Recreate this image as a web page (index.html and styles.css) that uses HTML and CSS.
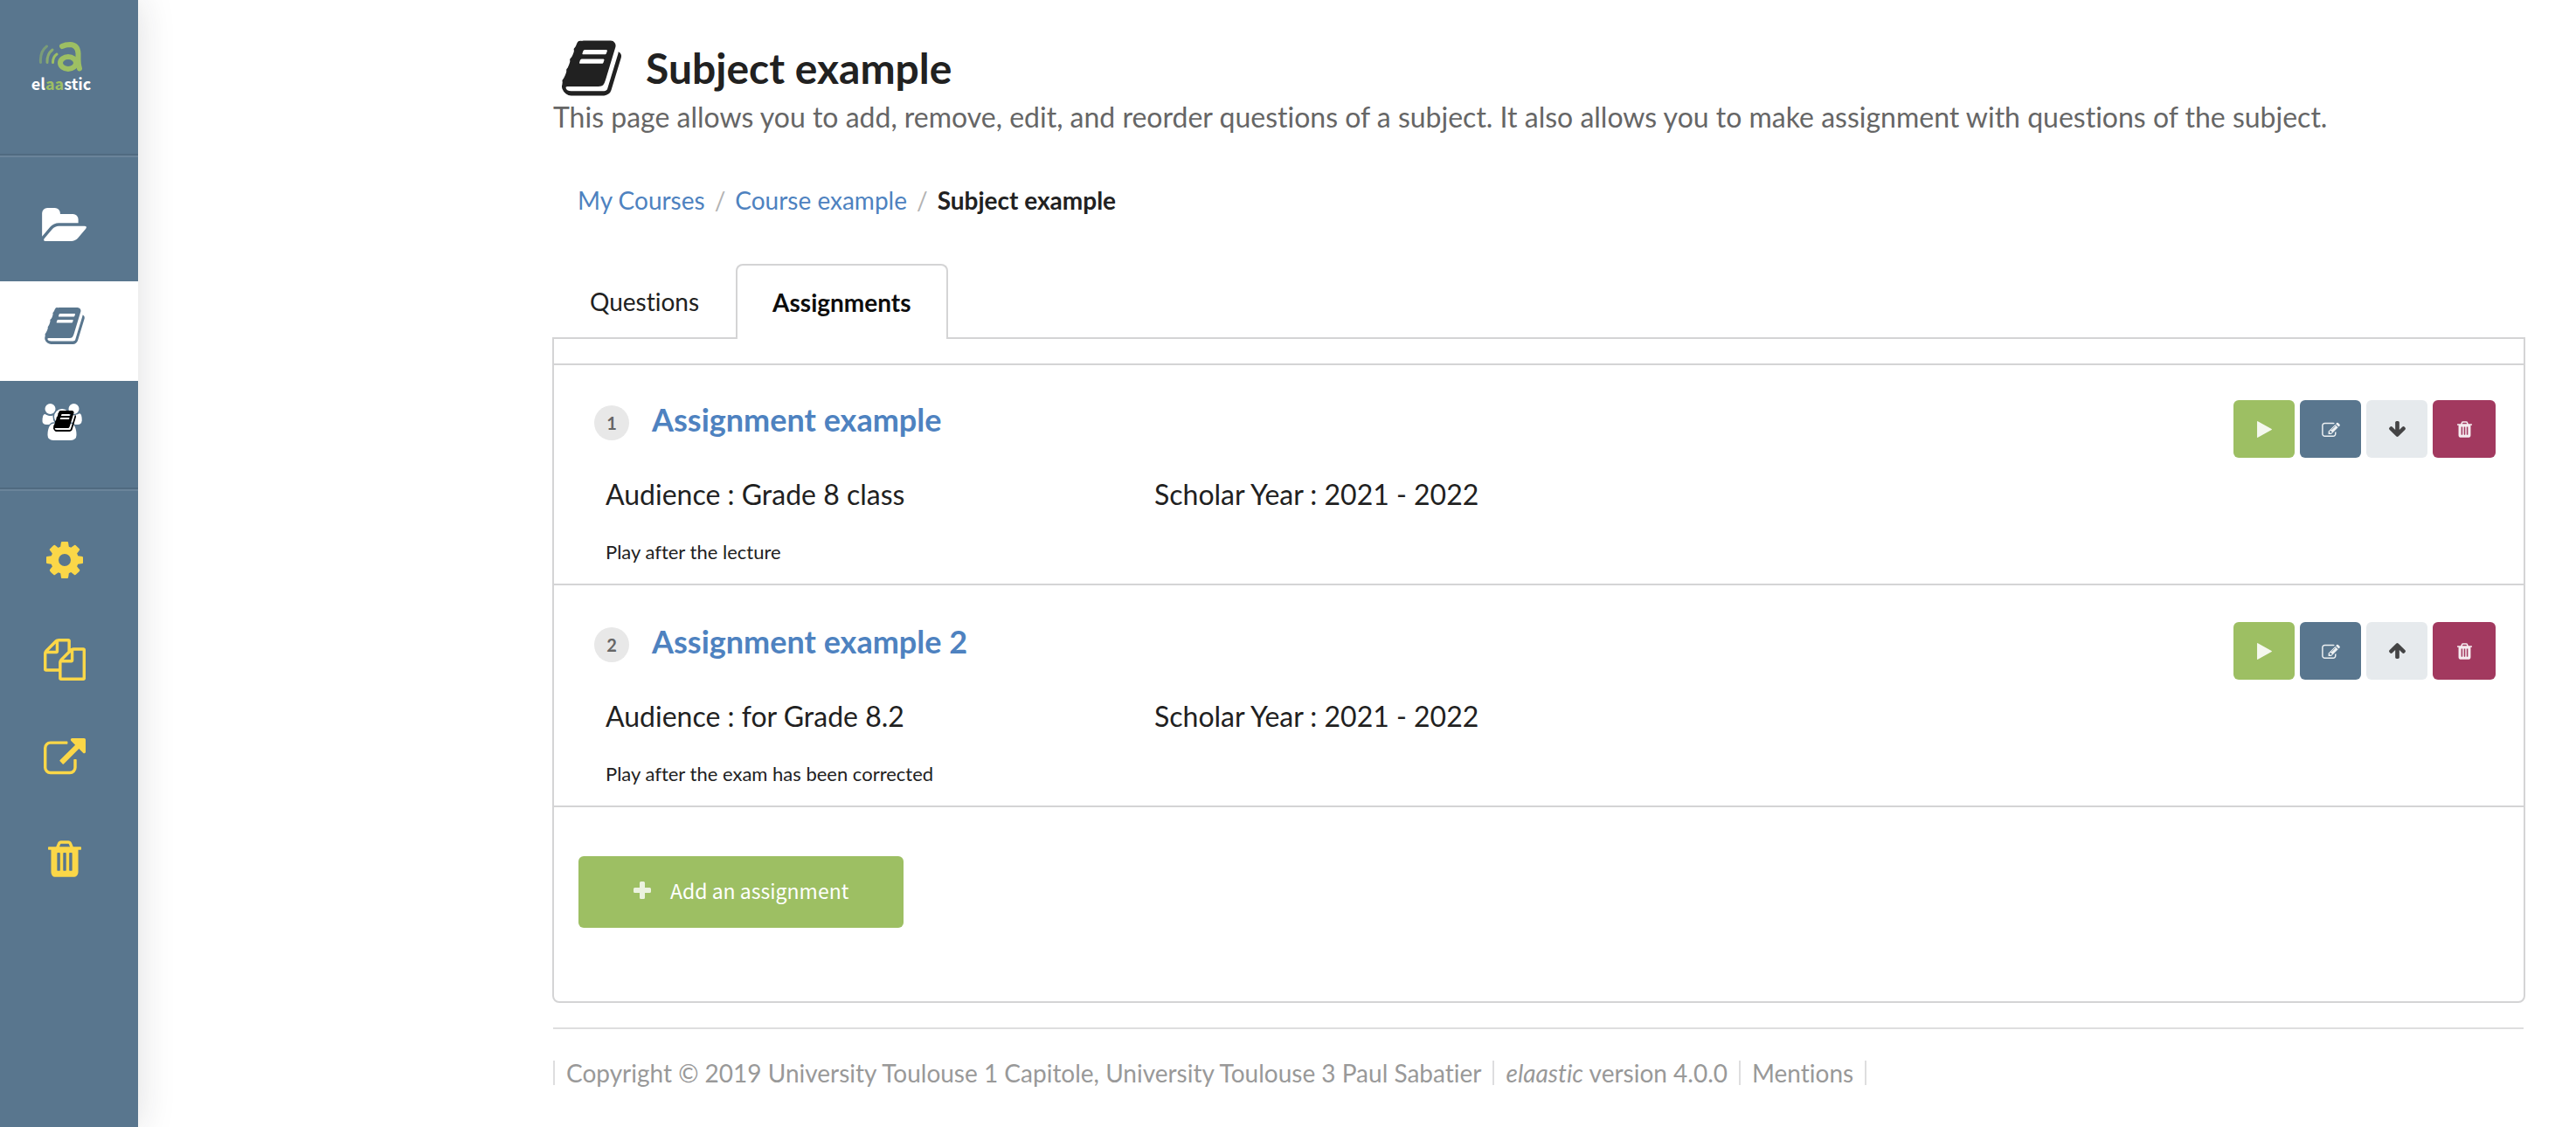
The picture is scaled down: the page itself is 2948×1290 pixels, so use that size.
FILE: index.html
```html
<!DOCTYPE html>
<html lang="en">
<head>
<meta charset="utf-8">
<meta name="viewport" content="width=device-width, initial-scale=1">
<title>Subject example - elaastic</title>
<link rel="stylesheet" href="styles.css">
</head>
<body class="page">
<svg class="sprite" aria-hidden="true">
  <symbol id="i-book" viewBox="0 128 1664 1536"><path d="M1639 478q40 57 18 129l-275 906q-19 64-76.500 107.500t-122.500 43.500h-923q-77 0-148.500-53.500t-99.500-131.500q-24-67-2-127 0-4 3-27t4-37q1-8-3-21.500t-3-19.500q2-11 8-21t16.500-23.500 16.500-23.500q23-38 45-91.500t30-91.500q3-10 .5-30t-.5-28q3-11 17-28t17-23q21-36 42-92t25-90q1-9-2.500-32t.5-28q4-13 22-30.500t22-22.500q19-26 42.500-84.500t27.500-96.500q1-8-3-25.500t-2-26.500q2-8 9-18t18-23 17-21q8-12 16.500-30.500t15-35 16-36 19.500-32 26.500-23.500 36-11.500 47.500 5.500l-1 3q38-9 51-9h761q74 0 114 56t18 130l-274 906q-36 119-71.500 153.500t-128.500 34.500h-869q-27 0-38 15-11 16-1 43 24 70 144 70h923q29 0 56-15.500t35-41.500l300-987q7-22 5-57 38 15 59 43zm-1064 2q-4 13 2 22.500t20 9.500h608q13 0 25.500-9.500t16.500-22.500l21-64q4-13-2-22.500t-20-9.500h-608q-13 0-25.500 9.500t-16.500 22.500zm-83 256q-4 13 2 22.500t20 9.500h608q13 0 25.500-9.500t16.500-22.500l21-64q4-13-2-22.500t-20-9.500h-608q-13 0-25.500 9.500t-16.500 22.500z"/></symbol>
  <symbol id="i-folder" viewBox="0 128 1879 1408"><path d="M1879 952q0 31-31 66l-336 396q-43 51-120.500 86.500t-143.500 35.500h-1088q-34 0-60.500-13t-26.500-43q0-31 31-66l336-396q43-51 120.500-86.500t143.500-35.500h1088q34 0 60.500 13t26.500 43zm-343-344v160h-832q-94 0-197 47.500t-164 119.500l-337 396-5 6q0-4-.5-12.500t-.5-12.500v-960q0-92 66-158t158-66h320q92 0 158 66t66 158v32h544q92 0 158 66t66 158z"/></symbol>
  <symbol id="i-group" viewBox="0 0 1920 1792"><path d="M593 896q-162 5-265 128h-134q-82 0-138-40.500t-56-118.500q0-353 124-353 6 0 43.500 21t97.500 42.500 119 21.500q67 0 133-23-5 37-5 66 0 159 93 293zm1071 637q0 120-73 189.500t-194 69.500h-874q-121 0-194-69.500t-73-189.500q0-53 3.500-103.500t14-109 26.500-108.500 43-97.500 62-81 85.500-53.500 111.500-20q10 0 43 21.500t73 48 107 48 135 21.500 135-21.500 107-48 73-48 43-21.500q61 0 111.500 20t85.500 53.500 62 81 43 97.500 26.500 108.500 14 109 3.500 103.500zm-1024-1277q0 106-75 181t-181 75-181-75-75-181 75-181 181-75 181 75 75 181zm704 384q0 159-112.500 271.500t-271.500 112.500-271.500-112.500-112.500-271.500 112.500-271.500 271.500-112.500 271.500 112.500 112.500 271.500zm576 225q0 78-56 118.500t-138 40.500h-134q-103-123-265-128 93-134 93-293 0-29-5-66 66 23 133 23 59 0 119-21.500t97.500-42.500 43.500-21q124 0 124 353zm-128-609q0 106-75 181t-181 75-181-75-75-181 75-181 181-75 181 75 75 181z"/></symbol>
  <symbol id="i-cog" viewBox="128 128 1536 1536"><path d="M1152 896q0-106-75-181t-181-75-181 75-75 181 75 181 181 75 181-75 75-181zm512-109v222q0 12-8 23t-20 13l-185 28q-19 54-39 91 35 50 107 138 10 12 10 25t-9 23q-27 37-99 108t-94 71q-12 0-26-9l-138-108q-44 23-91 38-16 136-29 186-7 28-36 28h-222q-14 0-24.500-8.500t-11.500-21.500l-28-184q-49-16-90-37l-141 107q-10 9-25 9-14 0-25-11-126-114-165-168-7-10-7-23 0-12 8-23 15-21 51-66.500t54-70.500q-27-50-41-99l-183-27q-13-2-21-12.500t-8-23.500v-222q0-12 8-23t19-13l186-28q14-46 39-92-40-57-107-138-10-12-10-24 0-10 9-23 26-36 98.500-107.500t94.500-71.500q13 0 26 10l138 107q44-23 91-38 16-136 29-186 7-28 36-28h222q14 0 24.500 8.500t11.500 21.500l28 184q49 16 90 37l142-107q9-9 24-9 13 0 25 10 129 119 165 170 7 8 7 22 0 12-8 23-15 21-51 66.500t-54 70.500q26 50 41 98l183 28q13 2 21 12.500t8 23.500z"/></symbol>
  <symbol id="i-copy" viewBox="0 0 1792 1792"><path d="M1696 384q40 0 68 28t28 68v1216q0 40-28 68t-68 28h-960q-40 0-68-28t-28-68v-288h-544q-40 0-68-28t-28-68v-672q0-40 20-88t48-76l408-408q28-28 76-48t88-20h416q40 0 68 28t28 68v328q68-40 128-40h416zm-544 213l-299 299h299v-299zm-640-384l-299 299h299v-299zm196 647l316-316v-416h-384v416q0 40-28 68t-68 28h-416v640h512v-256q0-40 20-88t48-76zm956 804v-1152h-384v416q0 40-28 68t-68 28h-416v640h896z"/></symbol>
  <symbol id="i-external" viewBox="64 0 1792 1792"><path d="M1472 928v320q0 119-84.500 203.500t-203.500 84.500h-832q-119 0-203.500-84.500t-84.500-203.500v-832q0-119 84.500-203.500t203.500-84.500h704q14 0 23 9t9 23v64q0 14-9 23t-23 9h-704q-66 0-113 47t-47 113v832q0 66 47 113t113 47h832q66 0 113-47t47-113v-320q0-14 9-23t23-9h64q14 0 23 9t9 23zm384-864v512q0 26-19 45t-45 19-45-19l-176-176-652 652q-10 10-23 10t-23-10l-114-114q-10-10-10-23t10-23l652-652-176-176q-19-19-19-45t19-45 45-19h512q26 0 45 19t19 45z"/></symbol>
  <symbol id="i-trash" viewBox="192 128 1408 1536"><path d="M704 1376v-704q0-14-9-23t-23-9h-64q-14 0-23 9t-9 23v704q0 14 9 23t23 9h64q14 0 23-9t9-23zm256 0v-704q0-14-9-23t-23-9h-64q-14 0-23 9t-9 23v704q0 14 9 23t23 9h64q14 0 23-9t9-23zm256 0v-704q0-14-9-23t-23-9h-64q-14 0-23 9t-9 23v704q0 14 9 23t23 9h64q14 0 23-9t9-23zm-544-992h448l-48-117q-7-9-17-11h-317q-10 2-17 11zm928 32v64q0 14-9 23t-23 9h-96v948q0 83-47 143.500t-113 60.500h-832q-66 0-113-58.500t-47-141.500v-952h-96q-14 0-23-9t-9-23v-64q0-14 9-23t23-9h309l70-167q15-37 54-63t79-26h320q40 0 79 26t54 63l70 167h309q14 0 23 9t9 23z"/></symbol>
  <symbol id="i-edit" viewBox="0 68 1784 1468"><path d="M888 1184l116-116-152-152-116 116v56h96v96h56zm440-720q-16-16-33 1l-350 350q-17 17-1 33t33-1l350-350q17-17 1-33zm80 594v190q0 119-84.500 203.500t-203.500 84.500h-832q-119 0-203.500-84.500t-84.500-203.500v-832q0-119 84.500-203.500t203.500-84.500h832q63 0 117 25 15 7 18 23 3 17-9 29l-49 49q-14 14-32 8-23-6-45-6h-832q-66 0-113 47t-47 113v832q0 66 47 113t113 47h832q66 0 113-47t47-113v-126q0-13 9-22l64-64q15-15 35-7t20 29zm-96-738l288 288-672 672h-288v-288zm444 132l-92 92-288-288 92-92q28-28 68-28t68 28l152 152q28 28 28 68t-28 68z"/></symbol>
  <symbol id="i-down" viewBox="117 128 1558 1483"><path d="M1675 832q0 53-37 90l-651 652q-39 37-91 37-53 0-90-37l-651-652q-38-36-38-90 0-53 38-91l74-75q39-37 91-37 53 0 90 37l294 294v-704q0-52 38-90t90-38h128q52 0 90 38t38 90v704l294-294q37-37 90-37 52 0 91 37l75 75q37 39 37 91z"/></symbol>
  <symbol id="i-play" viewBox="0 0 16 18"><path d="M0 .6Q0-.3.8.2L15.700 8.500q.6.5 0 1L.8 17.800Q0 18.300 0 17.400z"/></symbol>
  <symbol id="i-plus" viewBox="0 0 20 20"><path d="M8.500 0h3Q13 0 13 1.500V7h5.500Q20 7 20 8.500v3q0 1.500-1.500 1.500H13v5.500q0 1.500-1.500 1.500h-3Q7 20 7 18.500V13H1.500Q0 13 0 11.500v-3Q0 7 1.500 7H7V1.500Q7 0 8.500 0z"/></symbol>
</svg>

<nav class="sidebar" aria-label="Main">
  <a class="sidebar-logo" href="#">
    <svg class="logo-mark" viewBox="0 0 52 34" fill="none" aria-hidden="true">
      <path d="M2.500 23.500Q1.500 11 9.500 5" stroke="#7a9c79" stroke-width="3" stroke-linecap="round"/>
      <path d="M10 23.500Q9.500 14 16 9" stroke="#8aab70" stroke-width="3" stroke-linecap="round"/>
      <path d="M16.500 23.500Q16.500 17 21 14" stroke="#9dbf63" stroke-width="3" stroke-linecap="round"/>
      <path d="M27 5Q31 3 36 3Q45 3.500 45.500 13V20Q45.500 26 47 30.500" stroke="#9dbf63" stroke-width="6" stroke-linecap="round"/>
      <ellipse cx="34" cy="24" rx="9" ry="7" stroke="#9dbf63" stroke-width="6"/>
    </svg>
    <span class="logo-name">el<span class="logo-accent">aa</span>stic</span>
  </a>
  <div class="sidebar-group">
    <a class="sidebar-item sidebar-item-courses" href="#" aria-label="My courses"><svg class="icon-folder"><use href="#i-folder"/></svg></a>
    <a class="sidebar-item sidebar-item-active" href="#" aria-label="My subjects"><svg class="icon-book"><use href="#i-book"/></svg></a>
    <a class="sidebar-item sidebar-item-groups" href="#" aria-label="My assignments"><span class="icon-stack"><svg class="icon-group"><use href="#i-group"/></svg><svg class="icon-corner"><use href="#i-book"/></svg></span></a>
  </div>
  <div class="sidebar-group sidebar-tools">
    <a class="tool" href="#" aria-label="Settings"><svg class="icon-cog"><use href="#i-cog"/></svg></a>
    <a class="tool" href="#" aria-label="Duplicate"><svg class="icon-wide"><use href="#i-copy"/></svg></a>
    <a class="tool" href="#" aria-label="Share"><svg class="icon-wide"><use href="#i-external"/></svg></a>
    <a class="tool" href="#" aria-label="Delete subject"><svg class="icon-trash"><use href="#i-trash"/></svg></a>
  </div>
</nav>

<main class="content">
  <header class="page-header">
    <h1 class="page-title"><svg class="title-icon" aria-hidden="true"><use href="#i-book"/></svg>Subject example</h1>
    <p class="page-intro">This page allows you to add, remove, edit, and reorder questions of a subject. It also allows you to make assignment with questions of the subject.</p>
  </header>

  <nav class="breadcrumb" aria-label="Breadcrumb">
    <a href="#">My Courses</a><span class="slash">/</span><a href="#">Course example</a><span class="slash">/</span><span class="current">Subject example</span>
  </nav>

  <div class="tabs" role="tablist">
    <button class="tab" type="button" role="tab">Questions</button>
    <button class="tab tab-active" type="button" role="tab" aria-selected="true">Assignments</button>
  </div>

  <section class="panel">
    <ul class="assignments">
      <li class="assignment">
        <div class="assignment-head"><span class="number">1</span><h2 class="assignment-title"><a href="#">Assignment example</a></h2></div>
        <div class="actions">
          <button class="action action-play" type="button" aria-label="Play"><svg class="icon-play"><use href="#i-play"/></svg></button>
          <button class="action action-edit" type="button" aria-label="Edit"><svg class="icon-edit"><use href="#i-edit"/></svg></button>
          <button class="action action-move" type="button" aria-label="Move down"><svg class="icon-arrow"><use href="#i-down"/></svg></button>
          <button class="action action-delete" type="button" aria-label="Delete"><svg class="icon-bin"><use href="#i-trash"/></svg></button>
        </div>
        <div class="facts"><span>Audience : Grade 8 class</span><span>Scholar Year : 2021 - 2022</span></div>
        <p class="note">Play after the lecture</p>
      </li>
      <li class="assignment">
        <div class="assignment-head"><span class="number">2</span><h2 class="assignment-title"><a href="#">Assignment example 2</a></h2></div>
        <div class="actions">
          <button class="action action-play" type="button" aria-label="Play"><svg class="icon-play"><use href="#i-play"/></svg></button>
          <button class="action action-edit" type="button" aria-label="Edit"><svg class="icon-edit"><use href="#i-edit"/></svg></button>
          <button class="action action-move" type="button" aria-label="Move up"><svg class="icon-arrow icon-arrow-up"><use href="#i-down"/></svg></button>
          <button class="action action-delete" type="button" aria-label="Delete"><svg class="icon-bin"><use href="#i-trash"/></svg></button>
        </div>
        <div class="facts"><span>Audience : for Grade 8.2</span><span>Scholar Year : 2021 - 2022</span></div>
        <p class="note">Play after the exam has been corrected</p>
      </li>
    </ul>
    <button class="add-button" type="button"><svg class="icon-plus" aria-hidden="true"><use href="#i-plus"/></svg>Add an assignment</button>
  </section>

  <footer class="footer">
    <span class="footer-item">Copyright © 2019 University Toulouse 1 Capitole, University Toulouse 3 Paul Sabatier</span>
    <span class="footer-item"><em>elaastic</em> version 4.0.0</span>
    <a class="footer-item footer-last" href="#">Mentions</a>
  </footer>
</main>
</body>
</html>
```
FILE: styles.css
```css
* { box-sizing: border-box; }

.page {
  display: flex;
  min-height: 100vh;
  margin: 0;
  background: #fff;
  color: #212121;
  font-family: Lato, "Liberation Sans", sans-serif;
  font-size: 28px;
  line-height: 40px;
  font-variant-ligatures: none;
}

svg { display: block; fill: currentColor; }
a { text-decoration: none; }
button { font-family: inherit; font-variant-ligatures: none; border: 0; cursor: pointer; }
.sprite { position: absolute; width: 0; height: 0; }

/* Sidebar */
.sidebar {
  flex: none;
  width: 158px;
  background: #59768e;
  box-shadow: 0 0 40px rgba(34, 36, 38, 0.15);
  color: #fff;
}
.sidebar-logo {
  display: flex;
  flex-direction: column;
  align-items: center;
  height: 178px;
  padding: 48px 18px 0 0;
  border-bottom: 2px solid #506a80;
}
.logo-mark { width: 52px; height: 34px; fill: none; }
.logo-name {
  color: #fff;
  font-family: "Noto Sans CJK SC", sans-serif;
  font-size: 18px;
  font-weight: 700;
  line-height: 26px;
}
.logo-accent { color: #9dbf63; }
.sidebar-group { border-top: 2px solid #6a849a; }
.sidebar-item {
  display: flex;
  justify-content: center;
  color: #fff;
}
.sidebar-item-courses { height: 142px; padding: 58px 12px 0 0; }
.sidebar-item-active {
  height: 114px;
  padding: 30px 10px 0 0;
  background: #fff;
  color: #59768e;
}
.sidebar-item-groups { height: 124px; padding: 26px 16px 0 0; border-bottom: 2px solid #506a80; }
.sidebar-tools { display: flex; flex-direction: column; padding-top: 22px; }
.tool {
  display: flex;
  align-items: center;
  justify-content: center;
  height: 114px;
  padding-right: 10px;
  color: #fbd748;
}
.icon-folder { width: 51px; height: 38px; }
.icon-book { width: 46px; height: 42px; }
.icon-group { width: 46px; height: 42px; }
.icon-stack { position: relative; height: 42px; }
.icon-corner { position: absolute; left: 13px; top: 8px; width: 26px; height: 24px; color: #000; }
.icon-cog { width: 42px; height: 42px; }
.icon-wide { width: 48px; height: 48px; }
.icon-trash { width: 38px; height: 42px; }

/* Page header */
.content {
  flex: 1;
  min-width: 0;
  padding: 46px 60px 0 475px;
}
.page-title {
  display: flex;
  align-items: center;
  gap: 28px;
  margin: 0;
  padding-left: 10px;
  height: 64px;
  font-size: 48px;
  font-weight: 700;
}
.title-icon { width: 68px; height: 64px; }
.page-intro {
  margin: 4px 0 0;
  color: #666;
  font-size: 32px;
}

.breadcrumb {
  display: flex;
  gap: 11px;
  margin-top: 55px;
  padding-left: 28px;
}
.breadcrumb a { color: #4e82c0; }
.slash { color: #b3b3b3; }
.current { font-weight: 700; }

/* Tabs */
.tabs {
  display: flex;
  position: relative;
  margin: 53px 0 -2px;
}
.tab {
  height: 86px;
  padding: 0 42px;
  background: none;
  color: #212121;
  font-size: 28px;
}
.tab-active {
  padding: 0 40px;
  border: 2px solid #d4d4d5;
  border-bottom: 0;
  border-radius: 8px 8px 0 0;
  background: #fff;
  color: #0d0d0d;
  font-weight: 700;
}

.panel {
  margin: 0 -2px 0 -1px;
  padding: 28px 0 84px;
  border: 2px solid #d4d4d5;
  border-radius: 0 0 8px 8px;
}
.assignments {
  margin: 0;
  padding: 0;
  border-top: 2px solid #d4d4d5;
  list-style: none;
}
.assignment {
  display: grid;
  grid-template-columns: 1fr auto;
  padding: 40px 32px 16px 46px;
  border-bottom: 2px solid #d4d4d5;
}
.assignment + .assignment { padding-top: 42px; }
.assignment-head { display: flex; align-items: flex-start; gap: 26px; }
.number {
  width: 40px;
  height: 40px;
  margin-top: 6px;
  border-radius: 50%;
  background: #e8e8e8;
  color: #666;
  font-size: 20px;
  font-weight: 700;
  text-align: center;
}
.assignment-title { margin: 0; font-size: 36px; font-weight: 700; line-height: 44px; }
.assignment-title a { color: #4e82c0; }
.actions { display: flex; gap: 6px; }
.action {
  display: flex;
  align-items: center;
  justify-content: center;
  width: 70px;
  height: 66px;
  padding: 0;
  border-radius: 6px;
  color: #fff;
}
.action svg { opacity: 0.9; }
.action-play { background: #9dbf63; }
.action-edit { background: #59768e; }
.action-move { background: #e6eaed; color: #333; }
.action-delete { width: 72px; background: #a2395f; }
.icon-play { width: 17px; height: 19px; }
.icon-edit { width: 21px; height: 17px; }
.icon-arrow { width: 19px; height: 18px; }
.icon-arrow-up { transform: rotate(180deg); }
.icon-bin { width: 17px; height: 19px; }

.facts {
  display: grid;
  grid-column: 1 / -1;
  grid-template-columns: 628px 1fr;
  margin-top: 22px;
  padding-left: 13px;
  font-size: 32px;
}
.note {
  grid-column: 1 / -1;
  margin: 26px 0 0;
  padding-left: 13px;
  font-size: 22px;
}
.add-button {
  display: flex;
  align-items: center;
  gap: 22px;
  height: 82px;
  margin: 56px 0 0 28px;
  padding: 0 63px 4px;
  border-radius: 6px;
  background: #9dbf63;
  color: #fff;
  font-family: "Noto Sans CJK SC", sans-serif;
  font-size: 23px;
  line-height: 40px;
}
.icon-plus { width: 20px; height: 20px; opacity: 0.8; }

/* Footer */
.footer {
  display: flex;
  margin-top: 28px;
  padding-top: 36px;
  border-top: 2px solid #dededf;
  color: #999;
  line-height: 28px;
}
.footer-item {
  padding: 0 13px;
  border-left: 2px solid #dededf;
  color: #999;
}
.footer-last { border-right: 2px solid #dededf; }
```
